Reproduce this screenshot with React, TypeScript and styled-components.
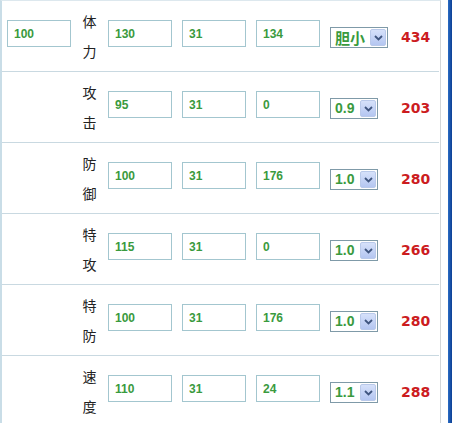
import styled, { createGlobalStyle } from "styled-components";

const GlobalStyle = createGlobalStyle`
  html, body {
    margin: 0;
    padding: 0;
    background: #ffffff;
    overflow: hidden;
  }
  body {
    font-family: "Liberation Sans", Arial, sans-serif;
  }
`;

const Page = styled.div`
  display: flex;
  width: 452px;
  height: 423px;
  overflow: hidden;
`;

const Panel = styled.div`
  width: 437px;
  border-left: 2px solid #c9dde7;
  border-right: 1px solid #d3d6d8;
  border-top: 1px solid #dde8ee;
  padding-right: 1px;
  box-sizing: content-box;
`;

const Gutter = styled.div`
  flex: 1;
`;

const EdgeBar = styled.div`
  width: 4px;
  background: linear-gradient(to right, #2b6cc4, #0c3f94);
`;

const Row = styled.div`
  display: grid;
  grid-template-columns: 5px 64px 37px 74px 74px 74px 71px auto;
  align-items: start;
  height: 51px;
  padding-top: 19px;
  border-bottom: 1px solid #c9d9e1;
`;

const Spacer = styled.div``;

const NumBox = styled.input`
  width: 64px;
  height: 27px;
  box-sizing: border-box;
  border: 1px solid #a3c6cf;
  padding: 0 0 0 6px;
  margin: 0;
  font-family: "Liberation Sans", Arial, sans-serif;
  font-size: 12px;
  font-weight: bold;
  color: #3a9a3e;
  background: #ffffff;
  outline: none;
`;

const Label = styled.div`
  margin-top: -14px;
  justify-self: center;
  font-family: "Noto Sans CJK SC", "Noto Sans", sans-serif;
  font-size: 14px;
  line-height: 30px;
  color: #222222;
  text-align: center;
  width: 16px;
`;

const Picker = styled.div<{ $wide: boolean }>`
  margin-top: 7px;
  width: ${p => (p.$wide ? 58 : 48)}px;
  height: 21px;
  box-sizing: border-box;
  border: 1px solid #7f9aa8;
  display: flex;
  align-items: center;
  justify-content: space-between;
  padding: 0 1px 0 4px;
  background: #ffffff;
`;

const PickText = styled.span<{ $cjk: boolean }>`
  font-family: ${p =>
    p.$cjk
      ? `"Noto Sans CJK SC", "Noto Sans", sans-serif`
      : `"Liberation Sans", Arial, sans-serif`};
  font-size: ${p => (p.$cjk ? 15 : 14)}px;
  font-weight: bold;
  color: #3a9a3e;
  line-height: 19px;
`;

const ArrowBox = styled.span`
  width: 16px;
  height: 17px;
  box-sizing: border-box;
  border: 1px solid #b9c9ea;
  border-radius: 2px;
  background: linear-gradient(to bottom, #d6e1fa, #b4c6f1);
  display: flex;
  align-items: center;
  justify-content: center;
`;

const Total = styled.div`
  margin-top: 7px;
  font-family: "DejaVu Sans", Verdana, sans-serif;
  font-size: 14px;
  font-weight: bold;
  line-height: 20px;
  color: #cc1c1f;
`;

type Stat = {
  name: string;
  base?: string;
  race: string;
  iv: string;
  ev: string;
  nature: string;
  total: number;
};

const stats: Stat[] = [
  { name: "体力", base: "100", race: "130", iv: "31", ev: "134", nature: "胆小", total: 434 },
  { name: "攻击", race: "95", iv: "31", ev: "0", nature: "0.9", total: 203 },
  { name: "防御", race: "100", iv: "31", ev: "176", nature: "1.0", total: 280 },
  { name: "特攻", race: "115", iv: "31", ev: "0", nature: "1.0", total: 266 },
  { name: "特防", race: "100", iv: "31", ev: "176", nature: "1.0", total: 280 },
  { name: "速度", race: "110", iv: "31", ev: "24", nature: "1.1", total: 288 },
];

function Chevron() {
  return (
    <svg width="9" height="6" viewBox="0 0 9 6">
      <path d="M1 1 L4.5 4.5 L8 1" fill="none" stroke="#3f557f" strokeWidth="1.8" />
    </svg>
  );
}

function StatRow({ s }: { s: Stat }) {
  const cjk = /[^\x00-\x7f]/.test(s.nature);
  return (
    <Row>
      <Spacer />
      {s.base ? <NumBox defaultValue={s.base} /> : <Spacer />}
      <Label>
        {s.name[0]}
        <br />
        {s.name[1]}
      </Label>
      <NumBox defaultValue={s.race} />
      <NumBox defaultValue={s.iv} />
      <NumBox defaultValue={s.ev} />
      <Picker $wide={cjk}>
        <PickText $cjk={cjk}>{s.nature}</PickText>
        <ArrowBox>
          <Chevron />
        </ArrowBox>
      </Picker>
      <Total>{s.total}</Total>
    </Row>
  );
}

export default function App() {
  return (
    <>
      <GlobalStyle />
      <Page>
        <Panel>
          {stats.map(s => (
            <StatRow key={s.name} s={s} />
          ))}
        </Panel>
        <Gutter />
        <EdgeBar />
      </Page>
    </>
  );
}
